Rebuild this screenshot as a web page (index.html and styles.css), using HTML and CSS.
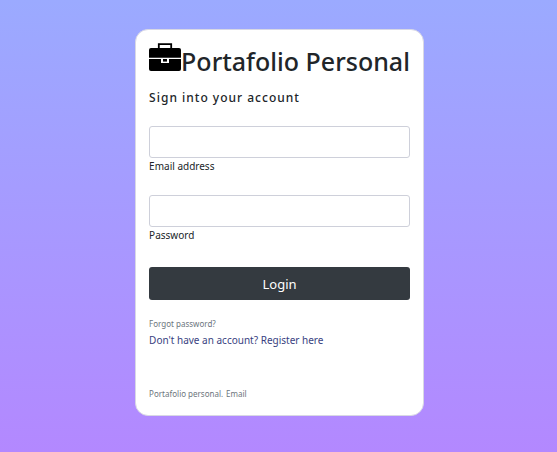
FILE: index.html
```html
<!DOCTYPE html>
<html lang="en">
<head>
<meta charset="utf-8">
<meta name="viewport" content="width=device-width, initial-scale=1">
<title>Portafolio Personal</title>
<link rel="stylesheet" href="styles.css">
</head>
<body>
<main class="card">
  <header class="brand">
    <svg class="brand-icon" viewBox="0 0 32 28" aria-hidden="true">
      <path d="M9.8 5V1.2h12.4V5" fill="none" stroke="#000" stroke-width="1.8"/>
      <path d="M2 5h28a2 2 0 0 1 2 2v7.7H0V7a2 2 0 0 1 2-2z"/>
      <path d="M0 16h32v10a2 2 0 0 1-2 2H2a2 2 0 0 1-2-2z"/>
      <path d="M12 15h8v5h-8z" fill="#fff"/>
      <path d="M14 16h4v2.6h-4z"/>
    </svg>
    <h1 class="brand-name">Portafolio Personal</h1>
  </header>
  <h2 class="subtitle">Sign into your account</h2>
  <form class="form">
    <div class="field">
      <input class="input" type="email" id="email">
      <label class="label" for="email">Email address</label>
    </div>
    <div class="field">
      <input class="input" type="password" id="password">
      <label class="label" for="password">Password</label>
    </div>
    <button class="login" type="button">Login</button>
  </form>
  <nav class="links">
    <a class="small-link" href="#forgot">Forgot password?</a>
    <p class="register">Don't have an account? <a href="#register">Register here</a></p>
  </nav>
  <footer class="footer">
    <a class="small-link" href="#home">Portafolio personal.</a>
    <a class="small-link" href="#contact">Email</a>
  </footer>
</main>
</body>
</html>
```
FILE: styles.css
```css
* {
  box-sizing: border-box;
}

body {
  margin: 0;
  min-height: 100vh;
  padding: 29px 16px 36px 18px;
  background: linear-gradient(#9baaff, #b388ff);
  color: #212529;
  font-family: "Noto Sans", "Open Sans", sans-serif;
  font-size: 11px;
  line-height: 16px;
}

.card {
  width: fit-content;
  margin: 0 auto;
  padding: 13px;
  background: #fff;
  border: 1px solid #d8d8e4;
  border-radius: 13px;
}

.brand {
  display: flex;
  align-items: center;
  height: 36px;
}

.brand-icon {
  flex: none;
  width: 32px;
  height: 28px;
  margin-bottom: 8px;
}

.brand-name {
  margin: 0;
  font-size: 25px;
  font-weight: 500;
  line-height: 36px;
  white-space: nowrap;
}

.subtitle {
  margin: 10px 0 19px;
  font-size: 12px;
  font-weight: 500;
  letter-spacing: 1px;
  line-height: 18px;
}

.form {
  display: grid;
  gap: 20px;
}

.input {
  display: block;
  width: 100%;
  height: 32px;
  padding: 4px 12px;
  border: 1px solid #ced0da;
  border-radius: 3px;
  background: #fff;
  font: inherit;
}

.label {
  display: block;
  height: 17px;
  font-size: 10px;
}

.login {
  width: 100%;
  height: 33px;
  margin-top: 3px;
  border: 0;
  border-radius: 3px;
  background: #343a40;
  color: #fff;
  font: inherit;
  font-size: 13px;
}

.links {
  margin-top: 15px;
}

.small-link {
  color: #6c757d;
  font-size: 8px;
  text-decoration: none;
}

.register {
  margin: 0;
  color: #393f81;
  font-size: 10px;
}

.register a {
  color: inherit;
  text-decoration: none;
}

.footer {
  margin-top: 37px;
}
```
